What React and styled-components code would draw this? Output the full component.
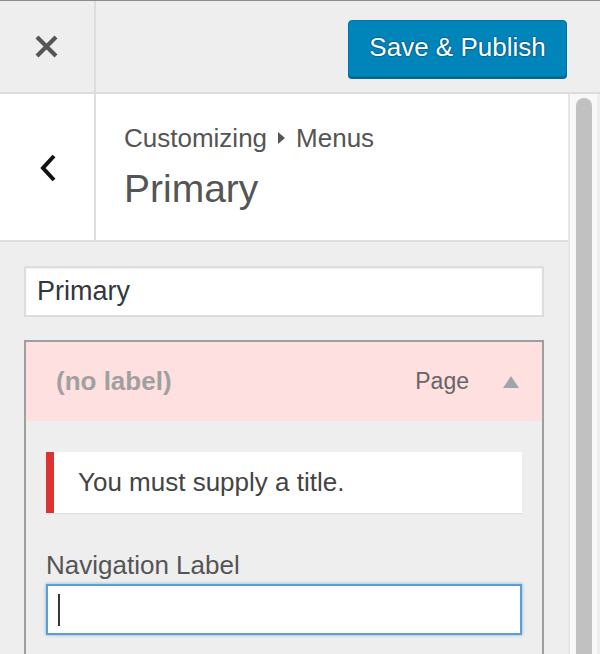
import React from 'react';
import styled, { createGlobalStyle } from 'styled-components';

const GlobalStyle = createGlobalStyle`
  html, body {
    margin: 0;
    padding: 0;
    height: 654px;
    overflow: hidden;
    background: #eeeeee;
    font-family: "Liberation Sans", Arial, sans-serif;
  }
  * { box-sizing: border-box; }
`;

const Page = styled.div`
  width: 600px;
  height: 654px;
  display: flex;
  flex-direction: column;
  overflow: hidden;
`;

const TopBar = styled.div`
  display: flex;
  height: 94px;
  flex-shrink: 0;
  background: #eeeeee;
  border-top: 1px solid #8c8c8c;
  border-bottom: 2px solid #dddddd;
`;

const IconCell = styled.div`
  width: 96px;
  flex-shrink: 0;
  display: flex;
  align-items: center;
  justify-content: center;
  padding: ${({ pad }) => pad || '0 2px 0 0'};
  border-right: 2px solid #dddddd;
  background: ${({ bg }) => bg || 'transparent'};
`;

const Actions = styled.div`
  flex: 1;
  display: flex;
  justify-content: flex-end;
  align-items: flex-start;
  padding: 19px 33px 0 0;
`;

const PublishButton = styled.button`
  width: 219px;
  height: 57px;
  padding: 0 0 2px;
  border: 1px solid #0073aa;
  border-radius: 4px;
  background: #0085ba;
  box-shadow: 0 2px 0 #006799;
  color: #fff;
  font-family: "Liberation Sans", Arial, sans-serif;
  font-size: 26px;
  text-shadow: 0 -1px 1px #006799, 1px 0 1px #006799, 0 1px 1px #006799, -1px 0 1px #006799;
  cursor: pointer;
`;

const Body = styled.div`
  flex: 1;
  display: flex;
  min-height: 0;
`;

const Main = styled.div`
  flex: 1;
  display: flex;
  flex-direction: column;
  min-width: 0;
`;

const ScrollTrack = styled.div`
  width: 32px;
  flex-shrink: 0;
  background: #f8f8f8;
  border-left: 2px solid #e6e6e6;
  border-right: 3px solid #eeeeee;
  padding: 4px 5px 0 6px;
  display: flex;
`;

const ScrollThumb = styled.div`
  flex: 1;
  background: #c1c1c1;
  border-radius: 8px 8px 0 0;
`;

const PanelTitle = styled.div`
  display: flex;
  height: 148px;
  background: #fff;
  border-bottom: 2px solid #dddddd;
`;

const TitleBlock = styled.div`
  flex: 1;
  padding: 29px 0 0 28px;
`;

const Crumb = styled.div`
  display: flex;
  align-items: center;
  gap: 11px;
  font-size: 26px;
  line-height: 30px;
  color: #555;
`;

const PanelName = styled.div`
  margin-top: 14px;
  font-size: 39px;
  line-height: 44px;
  color: #555;
`;

const Content = styled.div`
  flex: 1;
  padding: 24px 24px 0;
  display: flex;
  flex-direction: column;
  gap: 23px;
`;

const NameInput = styled.div`
  height: 51px;
  display: flex;
  align-items: center;
  padding: 0 11px;
  background: #fff;
  border: 2px solid #dddddd;
  box-shadow: inset 0 1px 2px rgba(0, 0, 0, 0.07);
  font-size: 27px;
  color: #32373c;
`;

const MenuItem = styled.div`
  flex: 1;
  border: 2px solid #9e9e9e;
  border-bottom: none;
  background: #eeeeee;
`;

const ItemHandle = styled.div`
  height: 79px;
  display: flex;
  align-items: center;
  padding: 0 23px 0 30px;
  background: #ffe0e0;
`;

const ItemTitle = styled.span`
  flex: 1;
  font-size: 26px;
  font-weight: bold;
  color: #a0a0a0;
`;

const ItemType = styled.span`
  font-size: 23px;
  color: #666;
  margin-right: 34px;
`;

const ItemSettings = styled.div`
  padding: 31px 20px 0;
`;

const Notice = styled.div`
  height: 61px;
  display: flex;
  align-items: center;
  padding-left: 24px;
  background: #fff;
  border-left: 8px solid #dc3232;
  box-shadow: 0 1px 1px rgba(0, 0, 0, 0.06);
  font-size: 26px;
  color: #444;
`;

const FieldLabel = styled.div`
  margin-top: 37px;
  font-size: 26px;
  line-height: 30px;
  color: #555;
`;

const FocusedInput = styled.div`
  margin-top: 4px;
  height: 51px;
  display: flex;
  align-items: center;
  padding-left: 10px;
  background: #fff;
  border: 2px solid #5b9dd9;
  box-shadow: 0 0 3px rgba(30, 140, 190, 0.6);
`;

const Caret = styled.span`
  width: 2px;
  height: 32px;
  background: #32373c;
`;

const CloseIcon = () => (
  <svg width="25" height="25" viewBox="0 0 25 25">
    <path d="M3 3 L22 22 M22 3 L3 22" stroke="#555" strokeWidth="4.2" fill="none" />
  </svg>
);

const BackIcon = () => (
  <svg width="18" height="30" viewBox="0 0 18 30">
    <path d="M15 3 L4 15 L15 27" stroke="#111" strokeWidth="4" fill="none" />
  </svg>
);

const CrumbArrow = () => (
  <svg width="7" height="12" viewBox="0 0 7 12">
    <path d="M0 0 L7 6 L0 12 Z" fill="#555" />
  </svg>
);

const ToggleArrow = () => (
  <svg width="16" height="12" viewBox="0 0 16 12">
    <path d="M8 0 L16 12 L0 12 Z" fill="#a0a5aa" />
  </svg>
);

export default function App() {
  return (
    <Page>
      <GlobalStyle />
      <TopBar>
        <IconCell>
          <CloseIcon />
        </IconCell>
        <Actions>
          <PublishButton>Save &amp; Publish</PublishButton>
        </Actions>
      </TopBar>
      <Body>
        <Main>
          <PanelTitle>
            <IconCell bg="#fff" pad="2px 0 0 2px">
              <BackIcon />
            </IconCell>
            <TitleBlock>
              <Crumb>
                <span>Customizing</span>
                <CrumbArrow />
                <span>Menus</span>
              </Crumb>
              <PanelName>Primary</PanelName>
            </TitleBlock>
          </PanelTitle>
          <Content>
            <NameInput>Primary</NameInput>
            <MenuItem>
              <ItemHandle>
                <ItemTitle>(no label)</ItemTitle>
                <ItemType>Page</ItemType>
                <ToggleArrow />
              </ItemHandle>
              <ItemSettings>
                <Notice>You must supply a title.</Notice>
                <FieldLabel>Navigation Label</FieldLabel>
                <FocusedInput>
                  <Caret />
                </FocusedInput>
              </ItemSettings>
            </MenuItem>
          </Content>
        </Main>
        <ScrollTrack>
          <ScrollThumb />
        </ScrollTrack>
      </Body>
    </Page>
  );
}
